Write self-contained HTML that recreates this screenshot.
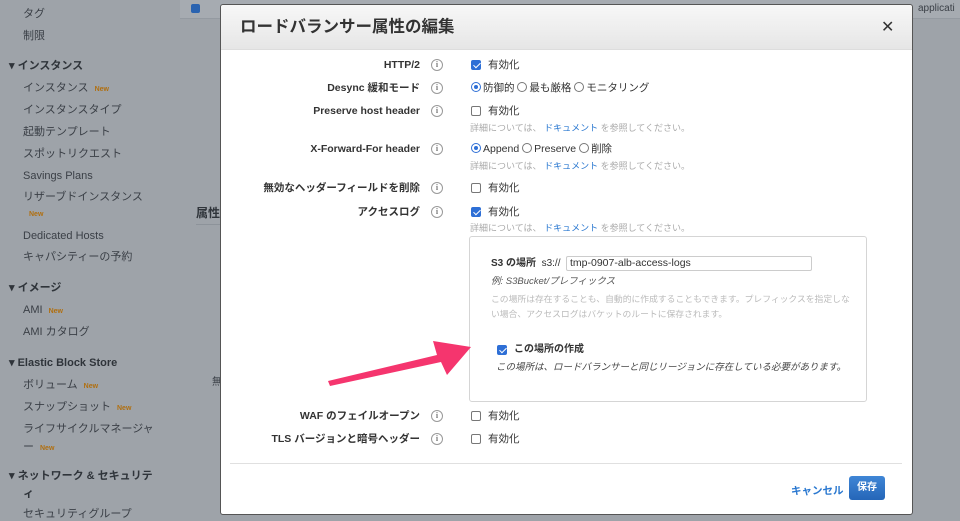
<!DOCTYPE html>
<html><head><meta charset="utf-8"><style>
*{box-sizing:border-box;margin:0;padding:0}
body{width:960px;height:518px;overflow:hidden;background:#9ea3a9;font-family:"Liberation Sans","Noto Sans CJK JP",sans-serif;position:relative;line-height:14px}
.a{position:absolute;white-space:nowrap}
.sb{font-size:11px;color:#3a3f46}
.sh{font-size:11px;font-weight:bold;color:#2f343a}
.new{font-size:7px;font-weight:bold;color:#b06f10;margin-left:6px}
.modal{position:absolute;left:220px;top:4px;width:693px;height:511px;background:#fff;border:1px solid #555;border-radius:3px}
.hd{height:45px;background:linear-gradient(#f7f7f7,#e6e6e6);border-bottom:1px solid #ddd;border-radius:3px 3px 0 0}
.lb{font-size:10.5px;font-weight:bold;color:#333;text-align:right;width:200px}
.info{width:12px;height:12px;border:1px solid #999;border-radius:50%;font-size:8px;color:#777;text-align:center;line-height:10px;font-family:"Liberation Serif",serif;font-weight:bold}
.cb{width:10px;height:10px;border:1px solid #777;border-radius:2px;background:#fff}
.cb.on{background:#2e6fd6;border-color:#2e6fd6}
.cb.on:after{content:"";position:absolute;left:3px;top:0px;width:3px;height:6px;border:solid #fff;border-width:0 1.5px 1.5px 0;transform:rotate(45deg)}
.t{font-size:10.5px;color:#333}
.h{font-size:9px;color:#aaa}
.h b{color:#2a78d0;font-weight:normal}
.rd{display:inline-block;width:10px;height:10px;border:1px solid #777;border-radius:50%;vertical-align:-1px;margin-right:2px;position:relative}
.rd.on{border-color:#2e6fd6}
.rd.on:after{content:"";position:absolute;left:2px;top:2px;width:4px;height:4px;border-radius:50%;background:#2e6fd6}
</style></head><body>
<div class="a sb" style="left:23px;top:7px">タグ</div>
<div class="a sb" style="left:23px;top:29px">制限</div>
<div class="a sh" style="left:9px;top:59px">▾ インスタンス</div>
<div class="a sb" style="left:23px;top:81px">インスタンス<span class="new">New</span></div>
<div class="a sb" style="left:23px;top:103px">インスタンスタイプ</div>
<div class="a sb" style="left:23px;top:125px">起動テンプレート</div>
<div class="a sb" style="left:23px;top:147px">スポットリクエスト</div>
<div class="a sb" style="left:23px;top:169px">Savings Plans</div>
<div class="a sb" style="left:23px;top:190px">リザーブドインスタンス</div>
<div class="a new" style="left:23px;top:208px">New</div>
<div class="a sb" style="left:23px;top:229px">Dedicated Hosts</div>
<div class="a sb" style="left:23px;top:250px">キャパシティーの予約</div>
<div class="a sh" style="left:9px;top:281px">▾ イメージ</div>
<div class="a sb" style="left:23px;top:303px">AMI<span class="new">New</span></div>
<div class="a sb" style="left:23px;top:325px">AMI カタログ</div>
<div class="a sh" style="left:9px;top:356px">▾ Elastic Block Store</div>
<div class="a sb" style="left:23px;top:378px">ボリューム<span class="new">New</span></div>
<div class="a sb" style="left:23px;top:400px">スナップショット<span class="new">New</span></div>
<div class="a sb" style="left:23px;top:422px">ライフサイクルマネージャ</div>
<div class="a sb" style="left:23px;top:440px">ー<span class="new">New</span></div>
<div class="a sh" style="left:9px;top:469px">▾ ネットワーク &amp; セキュリテ</div>
<div class="a sh" style="left:23px;top:487px">ィ</div>
<div class="a sb" style="left:23px;top:507px">セキュリティグループ</div>
<div class="a" style="left:180px;top:0;width:780px;height:19px;background:#a6abb1;border-bottom:1px solid #949aa1"></div>
<div class="a" style="left:191px;top:4px;width:9px;height:9px;background:#2a63b0;border-radius:2px"></div>
<div class="a sb" style="left:918px;top:2px;font-size:10px">applicati</div>
<div class="a sh" style="left:196px;top:206px;font-size:12px">属性</div>
<div class="a" style="left:196px;top:224px;width:30px;height:1px;background:#8d939a"></div>
<div class="a sb" style="left:212px;top:376px;font-size:10px">無</div>

<div class="modal">
<div class="hd"><div class="a" style="left:19px;top:12px;font-size:16.5px;line-height:20px;font-weight:bold;color:#333">ロードバランサー属性の編集</div>
<div class="a" style="left:660px;top:14px;font-size:16px;line-height:18px;color:#333">✕</div></div>
</div>
<div class="a" style="left:0;top:0">
<div class="a lb" style="left:220px;top:58px">HTTP/2</div>
<div class="a lb" style="left:220px;top:81px">Desync 緩和モード</div>
<div class="a lb" style="left:220px;top:104px">Preserve host header</div>
<div class="a lb" style="left:220px;top:142px">X-Forward-For header</div>
<div class="a lb" style="left:220px;top:181px">無効なヘッダーフィールドを削除</div>
<div class="a lb" style="left:220px;top:205px">アクセスログ</div>
<div class="a lb" style="left:220px;top:409px">WAF のフェイルオープン</div>
<div class="a lb" style="left:220px;top:432px">TLS バージョンと暗号ヘッダー</div>
<div class="a info" style="left:431px;top:59px">i</div>
<div class="a info" style="left:431px;top:82px">i</div>
<div class="a info" style="left:431px;top:105px">i</div>
<div class="a info" style="left:431px;top:143px">i</div>
<div class="a info" style="left:431px;top:182px">i</div>
<div class="a info" style="left:431px;top:206px">i</div>
<div class="a info" style="left:431px;top:410px">i</div>
<div class="a info" style="left:431px;top:433px">i</div>

<div class="a cb on" style="left:471px;top:60px"></div><div class="a t" style="left:488px;top:58px">有効化</div>
<div class="a t" style="left:471px;top:81px"><span class="rd on"></span>防御的 <span class="rd"></span>最も厳格 <span class="rd"></span>モニタリング</div>
<div class="a cb" style="left:471px;top:106px"></div><div class="a t" style="left:488px;top:104px">有効化</div>
<div class="a h" style="left:470px;top:121px">詳細については、 <b>ドキュメント</b> を参照してください。</div>
<div class="a t" style="left:471px;top:142px"><span class="rd on"></span>Append <span class="rd"></span>Preserve <span class="rd"></span>削除</div>
<div class="a h" style="left:470px;top:159px">詳細については、 <b>ドキュメント</b> を参照してください。</div>
<div class="a cb" style="left:471px;top:183px"></div><div class="a t" style="left:488px;top:181px">有効化</div>
<div class="a cb on" style="left:471px;top:207px"></div><div class="a t" style="left:488px;top:205px">有効化</div>
<div class="a h" style="left:470px;top:221px">詳細については、 <b>ドキュメント</b> を参照してください。</div>

<div class="a" style="left:469px;top:236px;width:398px;height:166px;border:1px solid #d5d5d5;border-radius:3px"></div>
<div class="a t" style="left:491px;top:257px;font-size:10px"><b>S3 の場所</b>&nbsp; s3://</div>
<div class="a" style="left:566px;top:256px;width:246px;height:15px;border:1px solid #ccc;border-radius:2px;font-size:10.5px;color:#333;padding-left:3px;line-height:13px">tmp-0907-alb-access-logs</div>
<div class="a t" style="left:491px;top:275px;font-size:9.5px;font-style:italic;color:#555">例: S3Bucket/プレフィックス</div>
<div class="a h" style="left:491px;top:292px;font-size:8.8px;color:#bbb">この場所は存在することも、自動的に作成することもできます。プレフィックスを指定しな</div>
<div class="a h" style="left:491px;top:307px;font-size:8.8px;color:#bbb">い場合、アクセスログはバケットのルートに保存されます。</div>
<div class="a cb on" style="left:497px;top:345px"></div>
<div class="a t" style="left:514px;top:343px;font-weight:bold;font-size:10px">この場所の作成</div>
<div class="a t" style="left:496px;top:361px;font-size:9.5px;font-style:italic;color:#444">この場所は、ロードバランサーと同じリージョンに存在している必要があります。</div>

<div class="a cb" style="left:471px;top:411px"></div><div class="a t" style="left:488px;top:409px">有効化</div>
<div class="a cb" style="left:471px;top:434px"></div><div class="a t" style="left:488px;top:432px">有効化</div>
<div class="a" style="left:230px;top:463px;width:672px;height:1px;background:#e0e0e0"></div>
<div class="a" style="left:791px;top:484px;font-size:10.5px;font-weight:bold;color:#2a78d0">キャンセル</div>
<div class="a" style="left:849px;top:476px;width:36px;height:24px;background:linear-gradient(#3f86d6,#2566b8);border-radius:3px;color:#fff;font-size:10px;font-weight:bold;text-align:center;line-height:24px">保存</div>
</div>
<svg class="a" style="left:0;top:0" width="960" height="518">
<polygon points="328,381 330,386 441,362 447,375 471,347 433,341 437,355" fill="#f5356e"/>
</svg>
</body></html>
